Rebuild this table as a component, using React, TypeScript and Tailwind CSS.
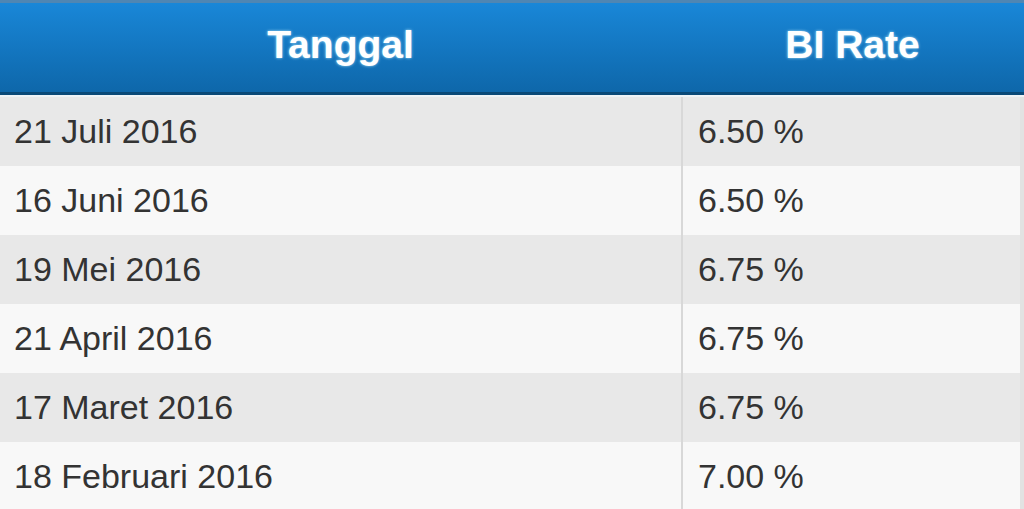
const rows = [
  { date: '21 Juli 2016', rate: '6.50 %' },
  { date: '16 Juni 2016', rate: '6.50 %' },
  { date: '19 Mei 2016', rate: '6.75 %' },
  { date: '21 April 2016', rate: '6.75 %' },
  { date: '17 Maret 2016', rate: '6.75 %' },
  { date: '18 Februari 2016', rate: '7.00 %' },
];

export default function App() {
  return (
    <div className="h-[509px] w-[1024px] overflow-hidden bg-[#f8f8f8] font-['Liberation_Sans',Arial,sans-serif]">
      <div className="flex h-[95px] border-t-[3px] border-b-[3px] border-t-[#4f86b3] border-b-[#0a4977] bg-gradient-to-b from-[#1987d8] to-[#0e67aa] text-[39px] font-bold text-white [text-shadow:0_0_3px_rgba(190,240,255,0.9)]">
        <div className="flex w-[681px] items-center justify-center pb-[4px]">Tanggal</div>
        <div className="flex flex-1 items-center justify-center pb-[4px]">BI Rate</div>
      </div>
      <div className="h-[2px] bg-[#eef3f7]" />
      <div className="flex flex-col border-r-[4px] border-[#e2e2e2]">
        {rows.map((row, i) => (
          <div
            key={row.date}
            className={`flex h-[69px] items-center text-[34px] text-[#333] ${i % 2 === 0 ? 'bg-[#e8e8e8]' : 'bg-[#f8f8f8]'}`}
          >
            <div className="flex h-full w-[681px] items-center pl-[14px]">{row.date}</div>
            <div className="flex h-full flex-1 items-center border-l-2 border-[#d8d8d8] pl-[15px]">{row.rate}</div>
          </div>
        ))}
      </div>
    </div>
  );
}
